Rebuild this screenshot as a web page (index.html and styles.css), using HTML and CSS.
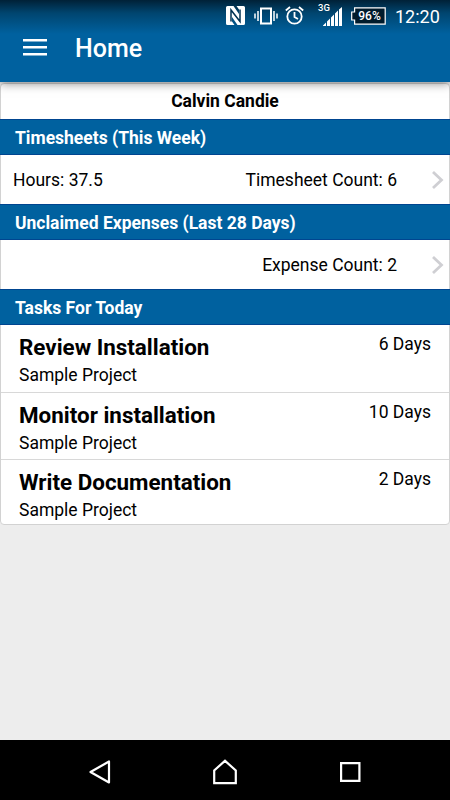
FILE: index.html
```html
<!DOCTYPE html>
<html lang="en">
<head>
<meta charset="utf-8">
<title>Home</title>
<link rel="stylesheet" href="styles.css">
</head>
<body>
<div class="screen">
  <header class="top">
    <div class="status">
      <svg class="nfc" width="19" height="19" viewBox="0 0 19 19"><path d="M1.500 0H7.500L13 8V3.500L10.500 0H17.500Q19 0 19 1.500V17.500Q19 19 17.500 19H11.500L6 11V15.500L8.500 19H1.500Q0 19 0 17.500V1.500Q0 0 1.500 0Z" fill="#fff"/><path d="M5 15.500V4L14 15.500V3.500" fill="none" stroke="#003252" stroke-width="1.500"/></svg>
      <svg class="vibrate" width="24" height="18" viewBox="0 0 24 18" fill="none" stroke="#fff" stroke-width="2"><rect x="7" y="1.500" width="10" height="15"/><path d="M4 4v10M1 6.500v5M20 4v10M23 6.500v5" stroke-width="1.500"/></svg>
      <svg class="alarm" width="19" height="19" viewBox="0 0 19 19" fill="none" stroke="#fff" stroke-width="1.800"><circle cx="9.500" cy="10.500" r="7.200"/><path d="M9.500 6v5l3.500 2M.8 4.500 5 1M18.200 4.500 14 1"/></svg>
      <div class="signal">
        <span class="network">3G</span>
        <svg width="19" height="19" viewBox="0 0 19 19" fill="#fff"><path d="M0 19v-.500L3 15.500V19ZM4 19v-4.500l3-3V19ZM8 19v-8.500l3-3V19ZM12 19V6.500l3-3V19ZM16 19V2.500L19 0v19Z"/></svg>
      </div>
      <div class="battery">
        <svg width="35" height="18" viewBox="0 0 35 18"><path d="M3.600.8H34.200V17.200H3.600V13H.7V5h2.900Z" fill="#001b2c" stroke="#fff" stroke-width="1.200"/></svg>
        <span class="percent">96%</span>
      </div>
      <span class="clock">12:20</span>
    </div>
    <div class="bar">
      <svg class="menu" width="24" height="17" viewBox="0 0 24 17" fill="#fff"><path d="M0 0h24v2.500H0ZM0 7h24v2.500H0ZM0 14h24v2.500H0Z"/></svg>
      <h1>Home</h1>
    </div>
  </header>
  <main class="content">
    <div class="list">
      <div class="user">Calvin Candie</div>
      <h2>Timesheets (This Week)</h2>
      <div class="summary"><span>Hours: 37.5</span><span class="count">Timesheet Count: 6</span>
        <svg width="13" height="20" viewBox="0 0 13 20" fill="none" stroke="#cfcfd3" stroke-width="2.800"><path d="m2 2 8.500 8L2 18"/></svg></div>
      <h2>Unclaimed Expenses (Last 28 Days)</h2>
      <div class="summary"><span class="count">Expense Count: 2</span>
        <svg width="13" height="20" viewBox="0 0 13 20" fill="none" stroke="#cfcfd3" stroke-width="2.800"><path d="m2 2 8.500 8L2 18"/></svg></div>
      <h2>Tasks For Today</h2>
      <div class="task"><div><h3>Review Installation</h3><p>Sample Project</p></div><span class="days">6 Days</span></div>
      <div class="task"><div><h3>Monitor installation</h3><p>Sample Project</p></div><span class="days">10 Days</span></div>
      <div class="task"><div><h3>Write Documentation</h3><p>Sample Project</p></div><span class="days">2 Days</span></div>
    </div>
  </main>
  <nav class="nav">
    <svg width="22" height="26" viewBox="0 0 22 26" fill="none" stroke="#fff" stroke-width="2.200" stroke-linejoin="round"><path d="M20 2.500v21L1.500 13Z"/></svg>
    <svg class="home" width="26" height="26" viewBox="0 0 26 26" fill="none" stroke="#fff" stroke-width="2.200"><path d="M2.200 24.200V11.500L13 1.800l10.800 9.700v12.700Z"/></svg>
    <svg width="21" height="20" viewBox="0 0 21 20" fill="none" stroke="#fff" stroke-width="2.200"><path d="M1.100 1.100h18.300v17.800H1.100Z"/></svg>
  </nav>
</div>
</body>
</html>
```
FILE: styles.css
```css
* { box-sizing: border-box; }
body { margin: 0; font-family: Roboto, sans-serif; font-size: 17.5px; color: #000; }
h1, h2, h3, p { margin: 0; }
svg { display: block; flex: none; }
.screen { width: 450px; height: 800px; display: flex; flex-direction: column; background: #ededed; }
.top { height: 82px; flex: none; color: #fff; background: linear-gradient(#002137 0, #00456f 13px, #00619f 34px); box-shadow: 0 1px 10px rgba(0,0,0,.5); position: relative; }
.status { height: 32px; display: flex; align-items: flex-start; padding-left: 226px; }
.nfc { margin-top: 6px; }
.vibrate { margin: 7px 0 0 9px; }
.alarm { margin: 6px 0 0 7px; }
.signal { width: 24px; height: 26px; margin-left: 14px; display: flex; flex-direction: column; align-items: flex-end; }
.network { font-size: 9.5px; line-height: 10px; font-weight: 500; align-self: flex-start; margin: 3px 0 -6px 0; }
.battery { display: grid; margin: 7px 0 0 9px; }
.battery > * { grid-area: 1 / 1; }
.percent { font-size: 12px; line-height: 18px; font-weight: 500; text-align: center; padding-left: 2px; position: relative; }
.clock { font-size: 18px; line-height: 33px; margin-left: 9px; }
.bar { height: 32px; display: flex; align-items: center; padding-left: 23px; gap: 28px; }
.menu { margin-top: -2px; }
.bar h1 { font-size: 25px; line-height: 32px; font-weight: 500; padding-top: 2px; }
.content { flex: 1; padding-top: 1px; }
.list { background: #fff; border: 1px solid #d2d2d2; border-radius: 4px; height: 442px; }
.user { height: 35px; line-height: 35px; text-align: center; font-weight: 700; }
.list h2 { height: 36px; line-height: 36px; margin: 0 -1px; padding-left: 15px; font-size: 17.5px; font-weight: 700; color: #fff; background: #00619f; border: solid #004590; border-width: 1px 0; }
.summary { height: 49px; display: flex; align-items: center; padding: 1px 5px 0 12px; }
.count { margin-left: auto; }
.summary svg { margin: -1px 0 0 34px; }
.task { height: 67.5px; display: flex; justify-content: space-between; padding: 9px 18px 0; border-bottom: 1px solid #d8d8d8; }
.task:last-child { border: 0; height: 64px; }
.task h3 { font-size: 22.4px; line-height: 27px; font-weight: 700; }
.task p { line-height: 28px; }
.days { line-height: 20px; }
.nav { height: 60px; background: #000; display: flex; align-items: center; justify-content: space-between; padding: 4px 89px 0; }
.home { margin-left: -2px; }
```
